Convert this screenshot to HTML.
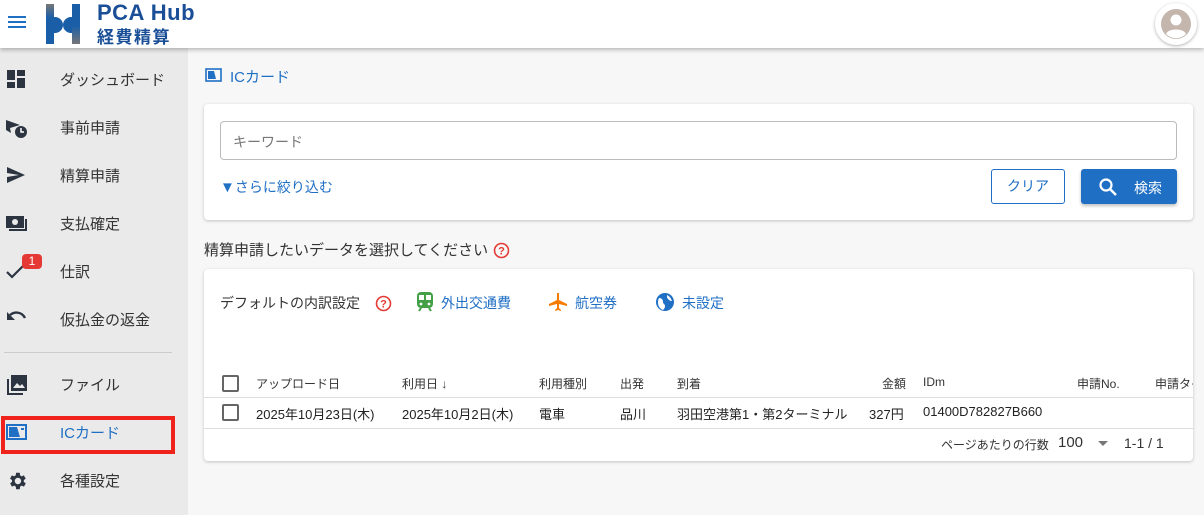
<!DOCTYPE html>
<html><head><meta charset="utf-8"><style>
*{box-sizing:border-box;margin:0;padding:0}
body{width:1204px;height:515px;overflow:hidden;background:#f7f7f7;font-family:"Liberation Sans","Noto Sans CJK JP",sans-serif;color:#333;position:relative}
.hdr{position:absolute;left:0;top:0;width:1204px;height:48px;background:#fff;box-shadow:0 2px 4px rgba(0,0,0,.25);z-index:5}
.side{position:absolute;left:0;top:48px;width:188px;height:467px;background:#eaeaea}
.it{position:absolute;left:0;width:188px;height:48px;font-size:15px;color:#333}
.it span{position:absolute;left:60px;top:13px}
.it svg{position:absolute;left:6px;top:13px}
.a{position:absolute}
.card{position:absolute;background:#fff;border-radius:4px;box-shadow:0 1px 3px rgba(0,0,0,.22)}
.blue{color:#1f6fc5}
.th{position:absolute;top:375px;font-size:12px;color:#333}
.td{position:absolute;top:404px;font-size:13px;color:#222}
.cb{position:absolute;width:17px;height:17px;border:2px solid #666;border-radius:2px;left:222px}
</style></head><body>
<div class="hdr">
 <div class="a" style="left:8px;top:16px;width:18px;height:2px;background:#1f6fc5;box-shadow:0 5px 0 #1f6fc5,0 10px 0 #1f6fc5"></div>
 <svg class="a" style="left:45px;top:4px" width="36" height="40" viewBox="0 0 36 40">
  <defs><linearGradient id="g1" x1="0" y1="0" x2="0" y2="1"><stop offset="0" stop-color="#777"/><stop offset=".35" stop-color="#1a5ea8"/></linearGradient><linearGradient id="g2" x1="0" y1="0" x2="0" y2="1"><stop offset=".55" stop-color="#1a5ea8"/><stop offset="1" stop-color="#777"/></linearGradient></defs>
  <rect x="1" y="0" width="8" height="40" fill="url(#g1)"/>
  <path d="M9 13h1a7 7 0 0 1 0 16H9z" fill="#1a5ea8"/>
  <path d="M27 13h-1a7 7 0 0 0 0 16h1z" fill="#1a5ea8"/>
  <rect x="27" y="0" width="8" height="40" fill="url(#g2)"/>
 </svg>
 <div class="a" style="left:97px;top:0px;font-size:22px;font-weight:bold;color:#1a4f98;letter-spacing:.5px">PCA Hub</div>
 <div class="a" style="left:97px;top:23px;font-size:17px;font-weight:bold;color:#1a4f98;letter-spacing:1.5px">経費精算</div>
 <div class="a" style="left:1155px;top:3px;width:42px;height:42px;border-radius:50%;background:#fff;box-shadow:0 1px 3px rgba(0,0,0,.3)"></div>
 <svg class="a" style="left:1161px;top:9px" width="30" height="30" viewBox="0 0 30 30"><circle cx="15" cy="15" r="15" fill="#c4b5ad"/><circle cx="15" cy="11" r="5.5" fill="#fff"/><path d="M5 25c2-6 18-6 20 0a14 14 0 0 1-20 0z" fill="#fff"/></svg>
</div>
<div class="side">
 <div class="it" style="top:8px"><svg width="20" height="20" viewBox="0 0 20 20"><path fill="#2b3440" d="M1 1h8v10H1zM11 1h8v6h-8zM11 9h8v10h-8zM1 13h8v6H1z"/></svg><span>ダッシュボード</span></div>
 <div class="it" style="top:56px"><svg width="22" height="22" viewBox="0 0 22 22"><path fill="#2b3440" d="M0 3l14 5-10 3 1 5-5-3z"/><circle cx="15" cy="15" r="6" fill="#2b3440"/><path d="M15 11v4h3" stroke="#fff" stroke-width="1.5" fill="none"/></svg><span>事前申請</span></div>
 <div class="it" style="top:104px"><svg width="20" height="20" viewBox="0 0 20 20"><path fill="#2b3440" d="M1 2l18 8-18 8v-6l12-2-12-2z"/></svg><span>精算申請</span></div>
 <div class="it" style="top:152px"><svg width="22" height="20" viewBox="0 0 22 20"><rect x="0" y="3" width="18" height="12" fill="#2b3440"/><circle cx="9" cy="9" r="3" fill="#eaeaea"/><path d="M20 6v11H3" stroke="#2b3440" stroke-width="2" fill="none"/></svg><span>支払確定</span></div>
 <div class="it" style="top:200px"><svg width="22" height="20" viewBox="0 0 22 20"><path d="M1 11l5 5L17 5" stroke="#2b3440" stroke-width="2.2" fill="none"/></svg><div class="a" style="left:22px;top:6px;width:20px;height:15px;background:#e53935;border-radius:4px;color:#fff;font-size:12px;text-align:center;line-height:15px">1</div><span>仕訳</span></div>
 <div class="it" style="top:248px"><svg width="22" height="20" viewBox="0 0 22 20"><path d="M4 6c5-4 12-3 15 3" stroke="#2b3440" stroke-width="2.4" fill="none"/><path fill="#2b3440" d="M1 3v8h8z"/></svg><span>仮払金の返金</span></div>
 <div class="a" style="left:4px;top:304px;width:168px;height:1px;background:#ccc"></div>
 <div class="it" style="top:313px"><svg width="22" height="22" viewBox="0 0 22 22"><path d="M2 5v15h15" stroke="#2b3440" stroke-width="2" fill="none"/><rect x="5" y="1" width="16" height="16" fill="#2b3440"/><path fill="#eaeaea" d="M7 14l4-5 3 3 2-2 3 4z"/></svg><span>ファイル</span></div>
 <div class="it" style="top:361px"><svg width="22" height="20" viewBox="0 0 22 20"><rect x="1" y="3" width="19" height="14" fill="none" stroke="#1f6fc5" stroke-width="2"/><path fill="#1f6fc5" d="M3 5h8l3 10H3z"/><path d="M15 7h3" stroke="#1f6fc5" stroke-width="2"/></svg><span class="blue">ICカード</span></div>
 <div class="a" style="left:1px;top:368px;width:174px;height:38px;border:4px solid #f0221c"></div>
 <div class="it" style="top:409px"><svg width="22" height="22" viewBox="0 0 24 24"><path fill="#2b3440" d="M19.4 13a7.5 7.5 0 0 0 0-2l2.1-1.6-2-3.5-2.5 1a7 7 0 0 0-1.7-1L15 3h-4l-.4 2.9a7 7 0 0 0-1.7 1l-2.5-1-2 3.5L6.6 11a7.5 7.5 0 0 0 0 2l-2.1 1.6 2 3.5 2.5-1a7 7 0 0 0 1.7 1L11 21h4l.4-2.9a7 7 0 0 0 1.7-1l2.5 1 2-3.5zM13 15.5a3.5 3.5 0 1 1 0-7 3.5 3.5 0 0 1 0 7z"/></svg><span>各種設定</span></div>
</div>
<svg class="a" style="left:205px;top:68px" width="17" height="14" viewBox="0 0 17 14"><rect x="1" y="1" width="15" height="12" fill="none" stroke="#1f6fc5" stroke-width="1.6"/><path fill="#1f6fc5" d="M3 3h6l2 8H3z"/></svg>
<div class="a blue" style="left:230px;top:66px;font-size:15px">ICカード</div>
<div class="card" style="left:204px;top:104px;width:989px;height:116px"></div>
<div class="a" style="left:220px;top:121px;width:957px;height:39px;border:1px solid #bbb;border-radius:4px;background:#fff"></div>
<div class="a" style="left:233px;top:132px;font-size:14px;color:#777">キーワード</div>
<div class="a blue" style="left:220px;top:177px;font-size:14px"><span style="font-size:15px">▼</span>さらに絞り込む</div>
<div class="a blue" style="left:991px;top:169px;width:74px;height:35px;border:1px solid #1f6fc5;border-radius:3px;font-size:14px;text-align:center;line-height:33px">クリア</div>
<div class="a" style="left:1081px;top:169px;width:96px;height:35px;background:#1f6fc5;border-radius:3px;box-shadow:0 2px 3px rgba(0,0,0,.25)"></div>
<svg class="a" style="left:1098px;top:177px" width="20" height="20" viewBox="0 0 20 20"><circle cx="8" cy="8" r="5.5" stroke="#fff" stroke-width="2.2" fill="none"/><path d="M12 12l6 6" stroke="#fff" stroke-width="2.5"/></svg>
<div class="a" style="left:1134px;top:178px;font-size:14px;color:#fff">検索</div>
<div class="a" style="left:204px;top:239px;font-size:15px;color:#333">精算申請したいデータを選択してください</div>
<svg class="a" style="left:493px;top:242px" width="17" height="17" viewBox="0 0 17 17"><circle cx="8.5" cy="8.5" r="7" stroke="#e53935" stroke-width="1.6" fill="none"/><text x="8.5" y="12.5" font-size="11" font-weight="bold" text-anchor="middle" fill="#e53935" font-family="Liberation Sans">?</text></svg>
<div class="card" style="left:204px;top:269px;width:989px;height:192px"></div>
<div class="a" style="left:220px;top:293px;font-size:14px;color:#333">デフォルトの内訳設定</div>
<svg class="a" style="left:375px;top:295px" width="17" height="17" viewBox="0 0 17 17"><circle cx="8.5" cy="8.5" r="7" stroke="#e53935" stroke-width="1.6" fill="none"/><text x="8.5" y="12.5" font-size="11" font-weight="bold" text-anchor="middle" fill="#e53935" font-family="Liberation Sans">?</text></svg>
<svg class="a" style="left:416px;top:292px" width="18" height="20" viewBox="0 0 18 20"><rect x="1" y="0" width="16" height="16" rx="4" fill="#43a047"/><rect x="3" y="3" width="5" height="5" fill="#fff"/><rect x="10" y="3" width="5" height="5" fill="#fff"/><circle cx="5" cy="12" r="1.4" fill="#fff"/><circle cx="13" cy="12" r="1.4" fill="#fff"/><path d="M3 19l2-3M15 19l-2-3" stroke="#43a047" stroke-width="2"/></svg>
<div class="a blue" style="left:441px;top:293px;font-size:14px">外出交通費</div>
<svg class="a" style="left:548px;top:292px" width="20" height="20" viewBox="0 0 20 20"><path fill="#f57c00" d="M9 1h2v7l8 4v2l-8-2v4l2 2v1l-3-1-3 1v-1l2-2v-4l-8 2v-2l8-4z"/></svg>
<div class="a blue" style="left:575px;top:293px;font-size:14px">航空券</div>
<svg class="a" style="left:655px;top:292px" width="20" height="20" viewBox="0 0 20 20"><circle cx="10" cy="10" r="9" fill="#1f6fc5"/><path fill="#fff" d="M4 6c3 0 4 2 4 4s2 2 2 4-1 3-2 4c-3-1-5-4-5-7 0-2 0-3 1-5zM12 3c2 1 4 3 5 6-2 0-3-1-4-2s-1-2-1-4z"/></svg>
<div class="a blue" style="left:682px;top:293px;font-size:14px">未設定</div>
<div class="cb" style="top:375px"></div>
<div class="th" style="left:256px">アップロード日</div>
<div class="th" style="left:402px">利用日 ↓</div>
<div class="th" style="left:539px">利用種別</div>
<div class="th" style="left:620px">出発</div>
<div class="th" style="left:677px">到着</div>
<div class="th" style="left:882px">金額</div>
<div class="th" style="left:923px">IDm</div>
<div class="th" style="left:1077px">申請No.</div>
<div class="th" style="left:1155px;width:38px;overflow:hidden;white-space:nowrap">申請タイプ</div>
<div class="a" style="left:204px;top:397px;width:989px;height:1px;background:#ddd"></div>
<div class="cb" style="top:404px"></div>
<div class="td" style="left:256px">2025年10月23日(木)</div>
<div class="td" style="left:402px">2025年10月2日(木)</div>
<div class="td" style="left:539px">電車</div>
<div class="td" style="left:620px">品川</div>
<div class="td" style="left:677px">羽田空港第1・第2ターミナル</div>
<div class="td" style="left:869px">327円</div>
<div class="td" style="left:923px">01400D782827B660</div>
<div class="a" style="left:204px;top:428px;width:989px;height:1px;background:#ddd"></div>
<div class="a" style="left:941px;top:436px;font-size:12px;color:#333">ページあたりの行数</div>
<div class="a" style="left:1058px;top:434px;font-size:15px;color:#333">100</div>
<div class="a" style="left:1098px;top:441px;width:0;height:0;border-left:5px solid transparent;border-right:5px solid transparent;border-top:5px solid #777"></div>
<div class="a" style="left:1124px;top:435px;font-size:14px;color:#333">1-1 / 1</div>
</body></html>
